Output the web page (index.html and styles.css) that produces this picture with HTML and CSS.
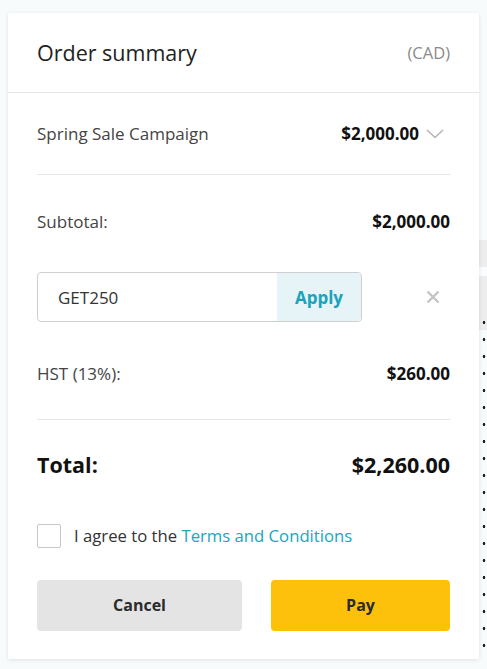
FILE: index.html
```html
<!DOCTYPE html>
<html>
<head>
<meta charset="utf-8">
<link rel="stylesheet" href="styles.css">
</head>
<body>
<div class="page">
  <div class="side">
    <div class="shade"></div>
    <div class="dots"></div>
  </div>
  <div class="card">
    <div class="header">
      <h1 class="title">Order summary</h1>
      <span class="currency">(CAD)</span>
    </div>
    <div class="body">
      <div class="row campaign">
        <span class="label">Spring Sale Campaign</span>
        <span class="amount-wrap">
          <span class="amount">$2,000.00</span>
          <svg class="chev" width="18" height="10" viewBox="0 0 18 10"><path d="M1 1 L9 8.5 L17 1" fill="none" stroke="#b5b5b5" stroke-width="1.6"/></svg>
        </span>
      </div>
      <div class="row subtotal">
        <span class="label">Subtotal:</span>
        <span class="amount">$2,000.00</span>
      </div>
      <div class="coupon-row">
        <div class="coupon">
          <span class="code">GET250</span>
          <span class="apply">Apply</span>
        </div>
        <svg class="close" width="14" height="14" viewBox="0 0 14 14"><path d="M1.5 1.5 L12.5 12.5 M12.5 1.5 L1.5 12.5" stroke="#c4c4c4" stroke-width="2.4" stroke-linecap="butt"/></svg>
      </div>
      <div class="row hst">
        <span class="label">HST (13%):</span>
        <span class="amount">$260.00</span>
      </div>
      <div class="row total">
        <span class="total-label">Total:</span>
        <span class="total-amount">$2,260.00</span>
      </div>
      <label class="agree">
        <span class="box"></span>
        <span class="agree-text">I agree to the <a class="link">Terms and Conditions</a></span>
      </label>
      <div class="actions">
        <button class="btn cancel">Cancel</button>
        <button class="btn pay">Pay</button>
      </div>
    </div>
  </div>
</div>
</body>
</html>
```
FILE: styles.css
```css
* { box-sizing: border-box; }
html, body {
  margin: 0;
  padding: 0;
  background: #f7fbfc;
  font-family: "Open Sans", "Noto Sans", sans-serif;
  color: #222;
}
.page {
  position: relative;
  width: 487px;
  height: 669px;
  padding: 13px 8px 0 8px;
}
.side {
  position: absolute;
  left: 479px;
  top: 0;
  width: 8px;
  height: 669px;
}
.shade {
  position: absolute;
  left: 0;
  top: 240px;
  width: 8px;
  height: 90px;
  background: linear-gradient(#ededed 0 30%, #fbfcfd 30% 40%, #ededed 40% 100%);
}
.dots {
  position: absolute;
  left: 3px;
  top: 314px;
  width: 4px;
  height: 340px;
  background-image: radial-gradient(circle, #222 0 1.2px, transparent 1.6px);
  background-size: 4px 17px;
}
.card {
  position: relative;
  width: 471px;
  height: 646px;
  background: #fff;
  box-shadow: 0 1px 4px rgba(0, 0, 0, 0.1);
}
.header {
  height: 80px;
  padding: 0 29px;
  display: flex;
  align-items: center;
  justify-content: space-between;
  border-bottom: 1px solid #e6e6e6;
}
.title {
  margin: 0 0 1px 0;
  font-size: 21.5px;
  font-weight: 400;
  color: #222;
}
.currency {
  font-size: 16.5px;
  color: #8a8a8a;
}
.body {
  padding: 0 29px;
}
.row {
  display: flex;
  align-items: center;
  justify-content: space-between;
}
.label {
  font-size: 17px;
  color: #444;
}
.amount {
  font-size: 17px;
  font-weight: 700;
  color: #111;
}
.campaign {
  height: 82px;
  border-bottom: 1px solid #e6e6e6;
}
.amount-wrap {
  display: flex;
  align-items: center;
  gap: 7px;
}
.chev { margin-right: 6px; }
.subtotal {
  height: 24px;
  margin-top: 34px;
}
.coupon-row {
  display: flex;
  align-items: center;
  margin-top: 39px;
}
.coupon {
  width: 325px;
  height: 50px;
  border: 1px solid #cfcfcf;
  border-radius: 4px;
  display: flex;
  overflow: hidden;
}
.code {
  flex: 1;
  display: flex;
  align-items: center;
  padding-left: 20px;
  font-size: 17px;
  color: #333;
}
.apply {
  width: 84px;
  display: flex;
  align-items: center;
  justify-content: center;
  background: #e6f4f8;
  color: #1aa3ba;
  font-size: 17px;
  font-weight: 700;
}
.close {
  margin-left: 64px;
}
.hst {
  height: 24px;
  margin-top: 39px;
}
.total {
  margin-top: 34px;
  border-top: 1px solid #e6e6e6;
  padding-top: 30px;
  height: 60px;
}
.total-label, .total-amount {
  font-size: 21.5px;
  font-weight: 700;
  color: #111;
}
.agree {
  display: flex;
  align-items: center;
  margin-top: 45px;
  height: 24px;
}
.box {
  width: 24px;
  height: 24px;
  border: 1px solid #c8c8c8;
  border-radius: 2px;
  background: #fff;
}
.agree-text {
  margin-left: 13px;
  font-size: 16.7px;
  color: #333;
  padding-bottom: 1px;
}
.link {
  color: #1aa6bf;
}
.actions {
  display: flex;
  gap: 29px;
  margin-top: 32px;
}
.btn {
  height: 51px;
  border: 0;
  border-radius: 4px;
  padding-bottom: 2px;
  font-family: "Open Sans", "Noto Sans", sans-serif;
  font-size: 16px;
  font-weight: 700;
  color: #2b2b2b;
}
.cancel {
  width: 205px;
  background: #e4e4e4;
}
.pay {
  flex: 1;
  background: #fec10b;
}
```
